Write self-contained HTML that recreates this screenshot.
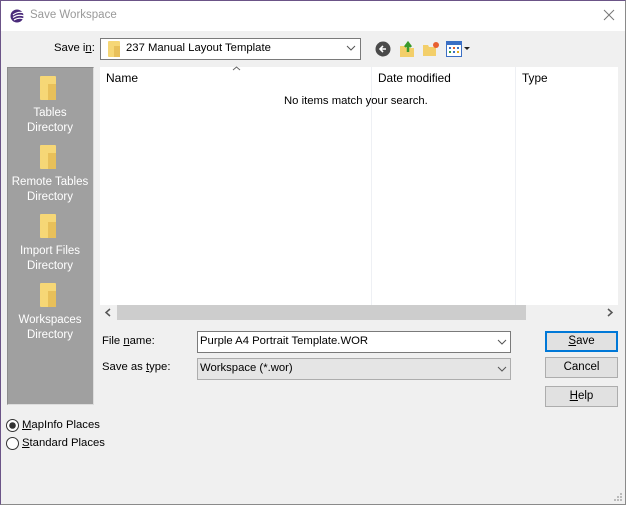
<!DOCTYPE html>
<html><head><style>
*{box-sizing:border-box;margin:0;padding:0}
body{width:626px;height:505px;background:#f0f0f0;font-family:"Liberation Sans",sans-serif;font-size:11.3px;line-height:15px;color:#000;position:relative;overflow:hidden}
.a{position:absolute}
.fold{position:absolute;width:16px;height:24px;background:#f6d776;border-radius:1px}
.fold:after{content:"";position:absolute;right:0;bottom:0;width:50%;height:66%;background:#e8c05a}
.pl{position:absolute;width:86px;text-align:center;color:#fff;font-size:11.5px;line-height:15px}
.btn{position:absolute;left:545px;width:73px;height:21px;background:#e1e1e1;border:1px solid #adadad;text-align:center;line-height:19px;font-size:11.5px}
u{text-decoration:underline}
</style></head><body>
<div class="a" style="left:0;top:0;width:626px;height:505px;border:1px solid #8a8a8a;border-left-color:#6b5487;border-top-color:#6b5487"></div>
<div class="a" style="left:1px;top:1px;width:624px;height:30px;background:#fff"></div>
<svg class="a" style="left:10px;top:9px" width="14" height="14" viewBox="0 0 14 14"><circle cx="7" cy="7" r="6.5" fill="#4a2a7a"/><path d="M3 6 Q8 2 14 4 M3 8.5 Q8 5 14 7 M4 11 Q9 8 14 10" stroke="#fff" stroke-width="1.2" fill="none"/></svg>
<div class="a" style="left:30px;top:8px;font-size:11.5px;color:#999">Save Workspace</div>
<svg class="a" style="left:603px;top:9px" width="12" height="12"><path d="M1 1L11 11M11 1L1 11" stroke="#777" stroke-width="1"/></svg>

<div class="a" style="left:54px;top:41px"><span>Save i<u>n</u>:</span></div>
<div class="a" style="left:100px;top:38px;width:261px;height:22px;background:#fff;border:1px solid #7a7a7a"></div>
<div class="fold" style="left:108px;top:41px;width:12px;height:16px"></div>
<div class="a" style="left:126px;top:41px">237 Manual Layout Template</div>
<svg class="a" style="left:346px;top:45px" width="10" height="6"><path d="M1 1L5 5L9 1" stroke="#555" fill="none"/></svg>

<svg class="a" style="left:375px;top:41px" width="16" height="16"><circle cx="8" cy="8" r="7.5" fill="#4a4a4a"/><path d="M11 8H5M8 5L5 8L8 11" stroke="#fff" stroke-width="1.6" fill="none"/></svg>
<svg class="a" style="left:399px;top:40px" width="16" height="18"><path d="M1 6h5l1 2h8v9H1z" fill="#f3cf6a"/><path d="M9 12V4M6 7l3-4 3 4" stroke="#3a9a2a" stroke-width="2.5" fill="none"/></svg>
<svg class="a" style="left:422px;top:41px" width="18" height="16"><path d="M1 4h5l1 2h7v9H1z" fill="#f3cf6a"/><circle cx="14" cy="4" r="3" fill="#e86030"/></svg>
<svg class="a" style="left:446px;top:41px" width="26" height="16"><rect x="0.5" y="0.5" width="15" height="15" fill="#fff" stroke="#3b6fc4"/><rect x="1" y="1" width="14" height="3" fill="#3b6fc4"/><rect x="3" y="6" width="2" height="2" fill="#3b6fc4"/><rect x="7" y="6" width="2" height="2" fill="#e05a2a"/><rect x="11" y="6" width="2" height="2" fill="#3b6fc4"/><rect x="3" y="10" width="2" height="2" fill="#3aa040"/><rect x="7" y="10" width="2" height="2" fill="#3b6fc4"/><rect x="11" y="10" width="2" height="2" fill="#e0b020"/><path d="M18 6h6l-3 3z" fill="#222"/></svg>

<div class="a" style="left:7px;top:67px;width:87px;height:338px;background:#a0a0a0;border:1px solid #8d8d8d;border-right-color:#ddd;border-bottom-color:#ddd"></div>
<div class="fold" style="left:40px;top:76px"></div>
<div class="pl" style="left:7px;top:106px">Tables<br>Directory</div>
<div class="fold" style="left:40px;top:145px"></div>
<div class="pl" style="left:7px;top:175px">Remote Tables<br>Directory</div>
<div class="fold" style="left:40px;top:214px"></div>
<div class="pl" style="left:7px;top:244px">Import Files<br>Directory</div>
<div class="fold" style="left:40px;top:283px"></div>
<div class="pl" style="left:7px;top:313px">Workspaces<br>Directory</div>

<div class="a" style="left:100px;top:67px;width:518px;height:238px;background:#fff"></div>
<div class="a" style="left:371px;top:67px;width:1px;height:238px;background:#eef0f4"></div>
<div class="a" style="left:515px;top:67px;width:1px;height:238px;background:#eef0f4"></div>
<svg class="a" style="left:232px;top:66px" width="9" height="5"><path d="M1 4L4.5 1L8 4" stroke="#666" fill="none"/></svg>
<div class="a" style="left:106px;top:71px;font-size:12px">Name</div>
<div class="a" style="left:378px;top:71px;font-size:11.8px">Date modified</div>
<div class="a" style="left:522px;top:71px;font-size:11.8px">Type</div>
<div class="a" style="left:284px;top:94px">No items match your search.</div>
<div class="a" style="left:100px;top:305px;width:518px;height:15px;background:#f0f0f0"></div>
<div class="a" style="left:117px;top:305px;width:409px;height:15px;background:#cdcdcd"></div>
<svg class="a" style="left:104px;top:308px" width="8" height="9"><path d="M6 1L2 4.5L6 8" stroke="#555" stroke-width="1.5" fill="none"/></svg>
<svg class="a" style="left:606px;top:308px" width="8" height="9"><path d="M2 1L6 4.5L2 8" stroke="#555" stroke-width="1.5" fill="none"/></svg>

<div class="a" style="left:102px;top:334px">File <u>n</u>ame:</div>
<div class="a" style="left:102px;top:360px">Save as <u>t</u>ype:</div>
<div class="a" style="left:197px;top:331px;width:314px;height:22px;background:#fff;border:1px solid #7a7a7a"></div>
<div class="a" style="left:200px;top:334px">Purple A4 Portrait Template.WOR</div>
<svg class="a" style="left:497px;top:339px" width="10" height="6"><path d="M1 1L5 5L9 1" stroke="#555" fill="none"/></svg>
<div class="a" style="left:197px;top:358px;width:314px;height:22px;background:#e5e5e5;border:1px solid #adadad"></div>
<div class="a" style="left:200px;top:361px">Workspace (*.wor)</div>
<svg class="a" style="left:497px;top:366px" width="10" height="6"><path d="M1 1L5 5L9 1" stroke="#555" fill="none"/></svg>

<div class="btn" style="top:331px;border:2px solid #0078d7;line-height:17px"><u>S</u>ave</div>
<div class="btn" style="top:357px">Cancel</div>
<div class="btn" style="top:386px"><u>H</u>elp</div>

<svg class="a" style="left:6px;top:419px" width="13" height="13"><circle cx="6.5" cy="6.5" r="6" fill="#fff" stroke="#333"/><circle cx="6.5" cy="6.5" r="3.3" fill="#333"/></svg>
<div class="a" style="left:22px;top:418px"><u>M</u>apInfo Places</div>
<svg class="a" style="left:6px;top:437px" width="13" height="13"><circle cx="6.5" cy="6.5" r="6" fill="#fff" stroke="#333"/></svg>
<div class="a" style="left:22px;top:436px"><u>S</u>tandard Places</div>
<svg class="a" style="left:613px;top:492px" width="10" height="10" fill="#bbb"><rect x="7" y="1" width="2" height="2"/><rect x="4" y="4" width="2" height="2"/><rect x="7" y="4" width="2" height="2"/><rect x="1" y="7" width="2" height="2"/><rect x="4" y="7" width="2" height="2"/><rect x="7" y="7" width="2" height="2"/></svg>
</body></html>
